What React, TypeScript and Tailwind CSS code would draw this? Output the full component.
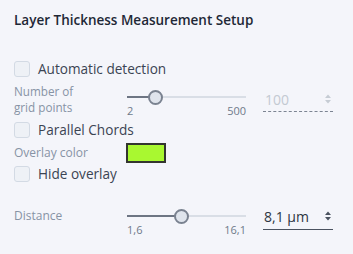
import React from "react";

const font = { fontFamily: '"Open Sans", "Noto Sans", sans-serif' };

const Checkbox = ({ label }: { label: string }) => (
  <label className="flex items-center gap-[8px] h-[16px]">
    <span className="w-[16px] h-[16px] rounded-[3px] border border-[#d3dae4] bg-[#eef1f6]" />
    <span className="text-[13.6px] text-[#3b4453] leading-none">{label}</span>
  </label>
);

const Spin = ({ color }: { color: string }) => (
  <svg width="8" height="10" viewBox="0 0 8 10" className="shrink-0">
    <path d="M4 0.5 L7 4 L1 4 Z" fill={color} />
    <path d="M4 9.5 L7 6 L1 6 Z" fill={color} />
  </svg>
);

const Slider = ({ pos, min, max }: { pos: number; min: string; max: string }) => (
  <div className="w-[119px] shrink-0">
    <div className="relative h-[14px]">
      <div className="absolute left-0 right-0 top-[6px] h-[2px] bg-[#d9dee6]" />
      <div className="absolute left-0 top-[6px] h-[2px] bg-[#6d7583]" style={{ width: pos }} />
      <div
        className="absolute top-0 w-[15px] h-[15px] rounded-full border-2 border-[#7a8290] bg-[#dfe4ec]"
        style={{ left: pos - 7 }}
      />
    </div>
    <div className="flex justify-between text-[11px] text-[#6f7a8a] mt-[1px] leading-none">
      <span>{min}</span>
      <span>{max}</span>
    </div>
  </div>
);

export default function App() {
  return (
    <div className="w-[353px] h-[254px] bg-[#f4f5fa] px-[14px] pt-[11px]" style={font}>
      <h1 className="text-[13.5px] font-semibold text-[#1e2836] leading-[18px]">
        Layer Thickness Measurement Setup
      </h1>

      <div className="mt-[32px]">
        <Checkbox label="Automatic detection" />
      </div>

      <div className="flex items-start mt-[8px] h-[32px]">
        <div className="w-[113px] text-[11.7px] leading-[16px] text-[#8793a5] mt-[-2px]">
          Number of
          <br />
          grid points
        </div>
        <div className="mt-[5px]">
          <Slider pos={28} min="2" max="500" />
        </div>
        <div className="ml-[17px] w-[70px] mt-[5px]">
          <div className="flex items-center justify-between h-[18px] pl-[2px] pr-[1px]">
            <span className="text-[14px] text-[#c3c9d2]">100</span>
            <Spin color="#c6ccd4" />
          </div>
          <div className="mt-[3px] border-b border-dashed border-[#7c8492]" />
        </div>
      </div>

      <div className="mt-[5px]">
        <Checkbox label="Parallel Chords" />
      </div>

      <div className="flex items-center mt-[5px] h-[20px]">
        <div className="w-[112px] text-[12px] text-[#8793a5]">Overlay color</div>
        <div className="w-[40px] h-[20px] border-2 border-[#33352f] bg-[#a9f830]" />
      </div>

      <div className="mt-[3px]">
        <Checkbox label="Hide overlay" />
      </div>

      <div className="flex items-start mt-[27px]">
        <div className="w-[113px] text-[12px] leading-[15px] text-[#8793a5] mt-[-1px]">
          Distance
        </div>
        <Slider pos={54} min="1,6" max="16,1" />
        <div className="ml-[17px] w-[70px] mt-[-2px]">
          <div className="flex items-center justify-between h-[18px] pl-[1px] pr-[1px]">
            <span className="text-[14px] text-[#2d3542]">8,1 µm</span>
            <Spin color="#4a525f" />
          </div>
          <div className="mt-[4px] border-b border-[#4a525f]" />
        </div>
      </div>
    </div>
  );
}
